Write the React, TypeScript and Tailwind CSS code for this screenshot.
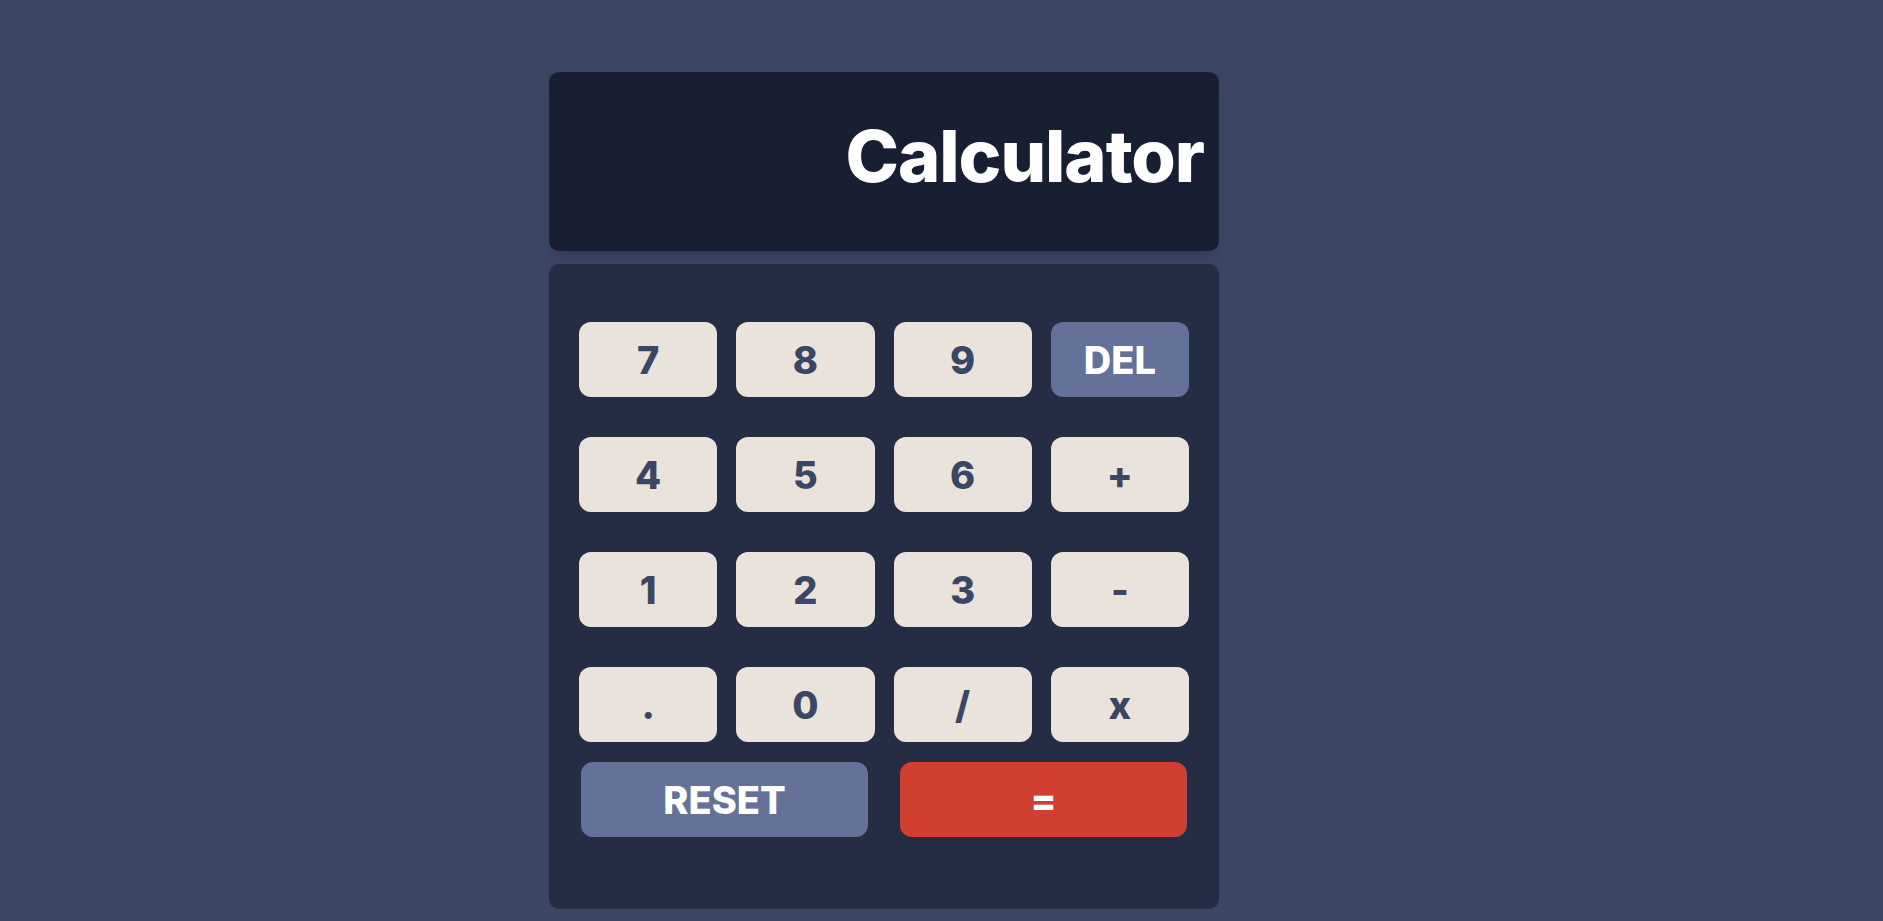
const KEYS = [
  { label: '7' },
  { label: '8' },
  { label: '9' },
  { label: 'DEL', kind: 'muted' },
  { label: '4' },
  { label: '5' },
  { label: '6' },
  { label: '+' },
  { label: '1' },
  { label: '2' },
  { label: '3' },
  { label: '-' },
  { label: '.' },
  { label: '0' },
  { label: '/' },
  { label: 'x' },
];

function Key({ label, kind }: { label: string; kind?: string }) {
  const colors =
    kind === 'muted'
      ? 'bg-[#647198] text-white'
      : kind === 'accent'
        ? 'bg-[#d03f2f] text-white'
        : 'bg-[#eae3dc] text-[#3b4664]';
  return (
    <button
      className={`h-[75px] rounded-[12px] flex items-center justify-center text-[38px] font-extrabold leading-none ${colors}`}
    >
      {label}
    </button>
  );
}

export default function App() {
  return (
    <div className="min-h-screen bg-[#3b4664] pt-[72px]" style={{ fontFamily: 'Inter, "Noto Sans", sans-serif' }}>
      <div className="ml-[549px] w-[670px] flex flex-col gap-[13px]">
        <div className="h-[179px] rounded-[10px] bg-[#181f33] shadow-lg flex items-center justify-end pr-[15px] pb-[11px]">
          <h1 className="text-[72px] font-extrabold tracking-[-0.015em] leading-none text-white">Calculator</h1>
        </div>

        <div className="rounded-[10px] bg-[#242d44] px-[30px] pt-[58px] pb-[72px]">
          <div className="grid grid-cols-4 gap-x-[19px] gap-y-[40px]">
            {KEYS.map((k) => (
              <Key key={k.label} label={k.label} kind={k.kind} />
            ))}
          </div>
          <div className="grid grid-cols-2 gap-[32px] px-[2px] mt-[20px]">
            <Key label="RESET" kind="muted" />
            <Key label="=" kind="accent" />
          </div>
        </div>
      </div>
    </div>
  );
}
